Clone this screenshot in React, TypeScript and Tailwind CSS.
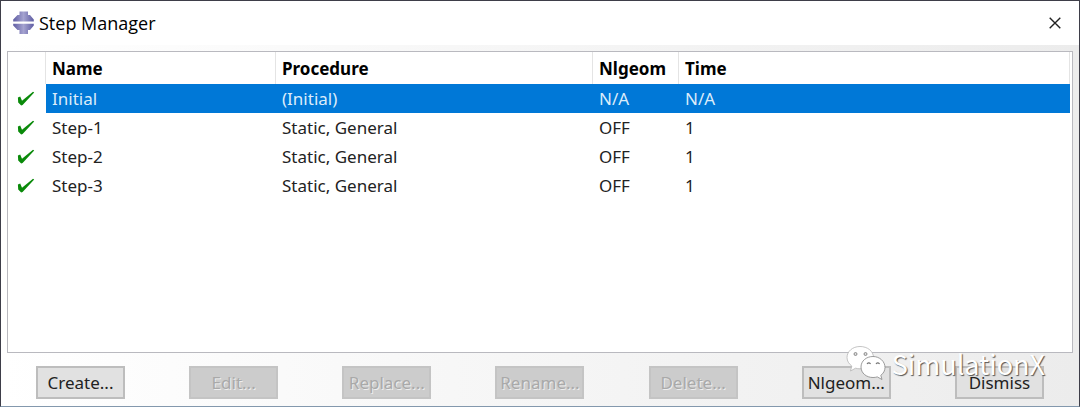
import { clsx } from 'clsx';

interface Step {
  name: string;
  procedure: string;
  nlgeom: string;
  time: string;
}

const STEPS: Step[] = [
  { name: 'Initial', procedure: '(Initial)', nlgeom: 'N/A', time: 'N/A' },
  { name: 'Step-1', procedure: 'Static, General', nlgeom: 'OFF', time: '1' },
  { name: 'Step-2', procedure: 'Static, General', nlgeom: 'OFF', time: '1' },
  { name: 'Step-3', procedure: 'Static, General', nlgeom: 'OFF', time: '1' },
];

const COLUMNS = ['Name', 'Procedure', 'Nlgeom', 'Time'];

const ACTIONS = [
  { label: 'Create...', disabled: false },
  { label: 'Edit...', disabled: true },
  { label: 'Replace...', disabled: true },
  { label: 'Rename...', disabled: true },
  { label: 'Delete...', disabled: true },
  { label: 'Nlgeom...', disabled: false },
  { label: 'Dismiss', disabled: false },
];

function AppIcon() {
  return (
    <svg className="h-6 w-6" viewBox="0 0 24 24" aria-hidden="true">
      <defs>
        <linearGradient id="metal" x1="0" x2="1">
          <stop offset="0" stopColor="#5f5da3" />
          <stop offset="0.5" stopColor="#a5a3d0" />
          <stop offset="1" stopColor="#5f5da3" />
        </linearGradient>
      </defs>
      <path d="M8.500 .5h8.500v3.500h2l3.800 4.500v2H2.200v-2L6.500 4h2z" fill="url(#metal)" />
      <path d="M2.200 12.800h20.600v1.700L19 19h-2v4H8.500v-4h-2l-4.300-4.500z" fill="url(#metal)" />
    </svg>
  );
}

function Check() {
  return (
    <svg className="ml-[9px] h-4 w-[18px]" viewBox="0 0 18 16" role="img" aria-label="Valid">
      <path d="M.9 6.500L3.200 5.600L5 9.800L16 .8L17.200 1.400L5.600 14L4.200 14.600L1.200 11.400Z" fill="#0a8a0a" />
    </svg>
  );
}

function Watermark() {
  return (
    <div className="pointer-events-none absolute right-[34px] bottom-6 flex items-center gap-1.5">
      <svg className="h-9 w-10" viewBox="0 0 40 36" aria-hidden="true">
        <g fill="#fff" strokeWidth="0.8">
          <path d="M14 .5C6.500 .5 1 5.500 1 11.500c0 3.500 2 6.500 4.800 8.500L4.500 25l5-2.800c1.500.4 3 .6 4.500.6 7.500 0 13.500-5 13.500-11.300S21.500 .5 14 .5z" stroke="#b5b5b5" />
          <path d="M27 10.500c-6.600 0-12 4.400-12 10.500s5.400 10.500 12 10.500c1.500 0 3-.2 4.300-.6l4.700 2.600-1.200-4.200c2.600-1.900 4.200-4.700 4.200-7.800 0-6.100-5.400-11-12-11z" stroke="#858585" />
        </g>
        <g fill="#ddd" stroke="#777" strokeWidth="0.8">
          <circle cx="9.500" cy="8" r="1.500" />
          <circle cx="19.500" cy="8" r="1.500" />
          <path d="M21 18q1.800-2.400 3.600 0M30 18q1.800-2.400 3.600 0" fill="none" strokeWidth="1.200" />
        </g>
      </svg>
      <span className="font-['Noto_Sans_CJK_SC',sans-serif] text-[27px] leading-9 text-white [text-shadow:1px_1px_1px_#555]">
        SimulationX
      </span>
    </div>
  );
}

export default function App() {
  return (
    <div className="relative flex flex-col border border-[#3e3e49] border-b-[#8398ad] bg-linear-to-r from-white to-[#ececec] font-['Noto_Sans',sans-serif] text-[17px] text-[#222]">
      <header className="flex h-11 items-center justify-between bg-white pr-3.5 pl-2.5">
        <div className="flex items-center gap-1">
          <AppIcon />
          <h1 className="font-['Open_Sans',sans-serif] text-[18px] leading-6 text-black">Step Manager</h1>
        </div>
        <button type="button" aria-label="Close" className="p-1">
          <svg className="h-3 w-3" viewBox="0 0 12 12" aria-hidden="true">
            <path d="M.7.7l10.600 10.600M11.300.7L.7 11.300" stroke="#222" strokeWidth="1.400" />
          </svg>
        </button>
      </header>

      <main className="mx-1.5 mt-1.5 min-h-[302px] border border-[#b9b9bf] bg-white pr-0.5">
        <table className="w-full table-fixed border-separate border-spacing-0 text-left">
          <colgroup>
            <col className="w-[38px]" />
            <col className="w-[230px]" />
            <col className="w-[317px]" />
            <col className="w-[86px]" />
            <col />
          </colgroup>
          <thead>
            <tr className="h-8 text-black">
              <th className="border-r border-[#e4e4e4] p-0" aria-label="Status" />
              {COLUMNS.map(c => (
                <th key={c} scope="col" className="border-r border-[#e4e4e4] pt-0.5 pr-0 pb-0 pl-1.5 leading-7 font-bold">{c}</th>
              ))}
            </tr>
          </thead>
          <tbody>
            {STEPS.map((s, i) => (
              <tr key={s.name} className="h-[29px]">
                <td className="p-0"><Check /></td>
                {[s.name, s.procedure, s.nlgeom, s.time].map((v, j) => (
                  <td key={j} className={clsx('py-0 pr-0 pl-1.5 leading-7', i === 0 && 'bg-[#0078d7] text-[#dcecfa]')}>
                    {v}
                  </td>
                ))}
              </tr>
            ))}
          </tbody>
        </table>
      </main>

      <footer className="flex justify-between pt-[13px] pr-[35px] pb-[7px] pl-[35px]">
        {ACTIONS.map(a => (
          <button
            key={a.label}
            type="button"
            disabled={a.disabled}
            className={clsx(
              'flex h-[33px] w-[89px] items-center justify-center border-2 whitespace-nowrap',
              a.disabled
                ? 'border-[#c4c4c4] bg-[#cccccc] text-[#a9a9a9] [text-shadow:1px_1px_0_#eee]'
                : 'border-[#bdbdbd] bg-[#e1e1e1]',
            )}
          >
            {a.label}
          </button>
        ))}
      </footer>

      <Watermark />
    </div>
  );
}
